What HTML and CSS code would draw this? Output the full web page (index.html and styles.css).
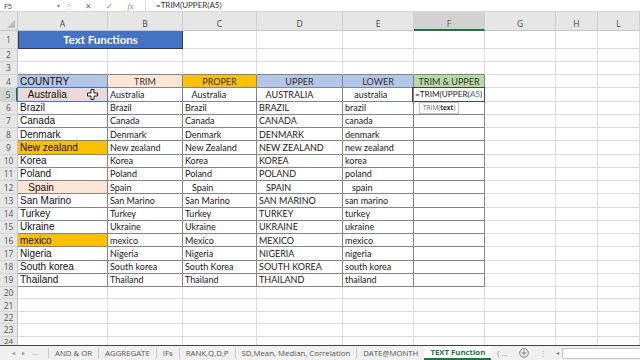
FILE: index.html
```html
<!DOCTYPE html>
<html>
<head>
<meta charset="utf-8">
<link rel="stylesheet" href="styles.css">
</head>
<body>
<div class="app">
  <div class="fbar">
    <div class="namebox"><span>F5</span><span class="dd">&#9662;</span></div>
    <div class="vdots">&#8942;</div>
    <div class="fbtn x">&#10005;</div>
    <div class="fbtn ok">&#10003;</div>
    <div class="fbtn fx"><i>fx</i></div>
    <div class="formula">=TRIM(UPPER(A5)</div>
  </div>

  <div class="sheet">
    <!-- header row -->
    <div class="corner"><span class="tri"></span></div>
    <div class="ch">A</div><div class="ch">B</div><div class="ch">C</div><div class="ch">D</div><div class="ch">E</div><div class="ch sel">F</div><div class="ch">G</div><div class="ch">H</div><div class="ch">L</div>

    <!-- row 1 -->
    <div class="rh">1</div>
    <div class="c title">Text Functions</div><div class="c"></div><div class="c"></div><div class="c"></div><div class="c"></div><div class="c"></div><div class="c"></div><div class="c"></div>
    <!-- row 2 -->
    <div class="rh">2</div>
    <div class="c"></div><div class="c"></div><div class="c"></div><div class="c"></div><div class="c"></div><div class="c"></div><div class="c"></div><div class="c"></div><div class="c"></div>
    <!-- row 3 -->
    <div class="rh">3</div>
    <div class="c tb"></div><div class="c tb"></div><div class="c tb"></div><div class="c tb"></div><div class="c tb"></div><div class="c tb"></div><div class="c"></div><div class="c"></div><div class="c"></div>
    <!-- row 4 -->
    <div class="rh">4</div>
    <div class="c t a blue">COUNTRY</div><div class="c t k ctr peach">TRIM</div><div class="c t k ctr orange">PROPER</div><div class="c t k ctr blue">UPPER</div><div class="c t k ctr blue">LOWER</div><div class="c t k ctr green">TRIM &amp; UPPER</div><div class="c"></div><div class="c"></div><div class="c"></div>
    <!-- row 5 -->
    <div class="rh sel">5</div>
    <div class="c t a rose ref">   Australia<svg class="cursor" width="11" height="11" viewBox="0 0 11 11"><path d="M4 0.5h3v3.5h3.5v3h-3.5v3.5h-3v-3.5h-3.5v-3h3.5z" fill="#fff" stroke="#222" stroke-width="1"/></svg></div><div class="c t k">Australia</div><div class="c t k">   Australia</div><div class="c t k">   AUSTRALIA</div><div class="c t k">    australia</div><div class="c t k active"><span class="ftxt">=TRIM(UPPER(<span class="refc">A5</span>)</span><div class="tip">TRIM(<b>text</b>)</div></div><div class="c"></div><div class="c"></div><div class="c"></div>
    <!-- row 6 -->
    <div class="rh">6</div>
    <div class="c t a">Brazil</div><div class="c t k">Brazil</div><div class="c t k">Brazil</div><div class="c t k">BRAZIL</div><div class="c t k">brazil</div><div class="c t k"></div><div class="c"></div><div class="c"></div><div class="c"></div>
    <!-- row 7 -->
    <div class="rh">7</div>
    <div class="c t a">Canada</div><div class="c t k">Canada</div><div class="c t k">Canada</div><div class="c t k">CANADA</div><div class="c t k">canada</div><div class="c t k"></div><div class="c"></div><div class="c"></div><div class="c"></div>
    <!-- row 8 -->
    <div class="rh">8</div>
    <div class="c t a">Denmark</div><div class="c t k">Denmark</div><div class="c t k">Denmark</div><div class="c t k">DENMARK</div><div class="c t k">denmark</div><div class="c t k"></div><div class="c"></div><div class="c"></div><div class="c"></div>
    <!-- row 9 -->
    <div class="rh">9</div>
    <div class="c t a orange">New zealand</div><div class="c t k">New zealand</div><div class="c t k">New Zealand</div><div class="c t k">NEW ZEALAND</div><div class="c t k">new zealand</div><div class="c t k"></div><div class="c"></div><div class="c"></div><div class="c"></div>
    <!-- row 10 -->
    <div class="rh">10</div>
    <div class="c t a">Korea</div><div class="c t k">Korea</div><div class="c t k">Korea</div><div class="c t k">KOREA</div><div class="c t k">korea</div><div class="c t k"></div><div class="c"></div><div class="c"></div><div class="c"></div>
    <!-- row 11 -->
    <div class="rh">11</div>
    <div class="c t a">Poland</div><div class="c t k">Poland</div><div class="c t k">Poland</div><div class="c t k">POLAND</div><div class="c t k">poland</div><div class="c t k"></div><div class="c"></div><div class="c"></div><div class="c"></div>
    <!-- row 12 -->
    <div class="rh">12</div>
    <div class="c t a peach">   Spain</div><div class="c t k">Spain</div><div class="c t k">   Spain</div><div class="c t k">   SPAIN</div><div class="c t k">   spain</div><div class="c t k"></div><div class="c"></div><div class="c"></div><div class="c"></div>
    <!-- row 13 -->
    <div class="rh">13</div>
    <div class="c t a">San Marino</div><div class="c t k">San Marino</div><div class="c t k">San Marino</div><div class="c t k">SAN MARINO</div><div class="c t k">san marino</div><div class="c t k"></div><div class="c"></div><div class="c"></div><div class="c"></div>
    <!-- row 14 -->
    <div class="rh">14</div>
    <div class="c t a">Turkey</div><div class="c t k">Turkey</div><div class="c t k">Turkey</div><div class="c t k">TURKEY</div><div class="c t k">turkey</div><div class="c t k"></div><div class="c"></div><div class="c"></div><div class="c"></div>
    <!-- row 15 -->
    <div class="rh">15</div>
    <div class="c t a">Ukraine</div><div class="c t k">Ukraine</div><div class="c t k">Ukraine</div><div class="c t k">UKRAINE</div><div class="c t k">ukraine</div><div class="c t k"></div><div class="c"></div><div class="c"></div><div class="c"></div>
    <!-- row 16 -->
    <div class="rh">16</div>
    <div class="c t a orange">mexico</div><div class="c t k">mexico</div><div class="c t k">Mexico</div><div class="c t k">MEXICO</div><div class="c t k">mexico</div><div class="c t k"></div><div class="c"></div><div class="c"></div><div class="c"></div>
    <!-- row 17 -->
    <div class="rh">17</div>
    <div class="c t a">Nigeria</div><div class="c t k">Nigeria</div><div class="c t k">Nigeria</div><div class="c t k">NIGERIA</div><div class="c t k">nigeria</div><div class="c t k"></div><div class="c"></div><div class="c"></div><div class="c"></div>
    <!-- row 18 -->
    <div class="rh">18</div>
    <div class="c t a">South korea</div><div class="c t k">South korea</div><div class="c t k">South Korea</div><div class="c t k">SOUTH KOREA</div><div class="c t k">south korea</div><div class="c t k"></div><div class="c"></div><div class="c"></div><div class="c"></div>
    <!-- row 19 -->
    <div class="rh">19</div>
    <div class="c t a">Thailand</div><div class="c t k">Thailand</div><div class="c t k">Thailand</div><div class="c t k">THAILAND</div><div class="c t k">thailand</div><div class="c t k"></div><div class="c"></div><div class="c"></div><div class="c"></div>
    <!-- rows 20-24 -->
    <div class="rh">20</div>
    <div class="c"></div><div class="c"></div><div class="c"></div><div class="c"></div><div class="c"></div><div class="c"></div><div class="c"></div><div class="c"></div><div class="c"></div>
    <div class="rh">21</div>
    <div class="c"></div><div class="c"></div><div class="c"></div><div class="c"></div><div class="c"></div><div class="c"></div><div class="c"></div><div class="c"></div><div class="c"></div>
    <div class="rh">22</div>
    <div class="c"></div><div class="c"></div><div class="c"></div><div class="c"></div><div class="c"></div><div class="c"></div><div class="c"></div><div class="c"></div><div class="c"></div>
    <div class="rh">23</div>
    <div class="c"></div><div class="c"></div><div class="c"></div><div class="c"></div><div class="c"></div><div class="c"></div><div class="c"></div><div class="c"></div><div class="c"></div>
    <div class="rh r24">24</div>
    <div class="c"></div><div class="c"></div><div class="c"></div><div class="c"></div><div class="c"></div><div class="c"></div><div class="c"></div><div class="c"></div><div class="c"></div>
  </div>

  <div class="tabbar">
    <div class="nav">
      <span class="arr">&#9666;</span><span class="arr">&#9656;</span><span class="more">...</span>
    </div>
    <div class="tab">AND &amp; OR</div>
    <div class="tab">AGGREGATE</div>
    <div class="tab">IFs</div>
    <div class="tab">RANK,Q,D,P</div>
    <div class="tab">SD,Mean, Median, Correlation</div>
    <div class="tab">DATE@MONTH</div>
    <div class="tab active">TEXT Function</div>
    <div class="tab last">( ...</div>
    <div class="plus"><svg width="10" height="10" viewBox="0 0 10 10"><circle cx="5" cy="5" r="4.3" fill="none" stroke="#777" stroke-width="0.9"/><path d="M5 2.6v4.8M2.6 5h4.8" stroke="#777" stroke-width="0.9"/></svg></div>
    <div class="vsep">&#8942;</div>
    <div class="hs"><span class="harr">&#9666;</span><div class="track"></div></div>
  </div>
</div>
</body>
</html>
```

FILE: styles.css
```css
html, body {
  margin: 0;
  padding: 0;
  background: #ffffff;
}
.app {
  width: 640px;
  height: 360px;
  display: flex;
  flex-direction: column;
  overflow: hidden;
  font-family: "Open Sans", "Noto Sans", sans-serif;
}

/* formula bar */
.fbar {
  height: 11px;
  flex: none;
  display: flex;
  align-items: center;
  border-bottom: 1px solid #d6d6d6;
  background: #fff;
  font-size: 7.5px;
  color: #444;
}
.namebox {
  width: 60px;
  margin-left: 2px;
  display: flex;
  justify-content: space-between;
  align-items: center;
  padding: 0 2px;
  box-sizing: border-box;
  height: 11px;
}
.namebox .dd {
  font-size: 6px;
  color: #888;
}
.vdots {
  width: 14px;
  text-align: center;
  color: #aaa;
  font-size: 8px;
}
.fbtn {
  width: 21px;
  text-align: center;
  color: #777;
  font-size: 8px;
}
.fbtn.x { margin-left: 2px; }
.fbtn.fx i {
  font-family: "Liberation Serif", serif;
  font-size: 8px;
  color: #888;
}
.formula {
  margin-left: 4px;
  padding-left: 10px;
  border-left: 1px solid #e2e2e2;
  height: 11px;
  line-height: 11px;
  color: #333;
  font-family: "Lato", sans-serif;
  font-size: 8px;
}

/* sheet */
.sheet {
  flex: 1;
  display: grid;
  grid-template-columns: 18px 90px 75px 74px 86px 71px 71px 71px 42px 42px;
  grid-template-rows: 19px 17.5px repeat(18, 13.25px) repeat(5, 12.4px);
  overflow: hidden;
  min-height: 0;
}
.corner {
  background: #e6e6e6;
  border-right: 1px solid #c6c6c6;
  border-bottom: 1px solid #c6c6c6;
  position: relative;
}
.corner .tri {
  position: absolute;
  right: 2px;
  bottom: 2px;
  width: 0;
  height: 0;
  border-left: 8px solid transparent;
  border-bottom: 8px solid #bcbcbc;
}
.ch {
  background: #e6e6e6;
  border-right: 1px solid #cfcfcf;
  border-bottom: 1px solid #c6c6c6;
  color: #444;
  font-size: 8.5px;
  display: flex;
  align-items: center;
  justify-content: center;
  padding-top: 5px;
  box-sizing: border-box;
}
.ch.sel {
  background: #d2d2d2;
  border-bottom: 2px solid #217346;
  color: #217346;
}
.rh {
  background: #e6e6e6;
  border-right: 1px solid #c6c6c6;
  border-bottom: 1px solid #d4d4d4;
  color: #555;
  font-size: 8.5px;
  display: flex;
  align-items: center;
  justify-content: center;
  box-sizing: border-box;
}
.rh.r24 { align-items: flex-start; line-height: 8px; padding-top: 0; font-size: 8px; }
.rh.sel {
  background: #d2d2d2;
  border-right: 2px solid #217346;
  color: #217346;
}

.c {
  border-right: 1px solid #dcdcdc;
  border-bottom: 1px solid #dcdcdc;
  box-sizing: border-box;
  display: flex;
  align-items: center;
  padding-left: 2px;
  white-space: pre;
  overflow: visible;
  color: #111;
  min-width: 0;
  position: relative;
}
.c.tb { border-bottom-color: #858585; }
.c.t {
  border-right-color: #858585;
  border-bottom-color: #858585;
}
.c.a {
  font-family: "Liberation Sans", Arial, sans-serif;
  font-size: 10px;
}
.c.k {
  font-family: "Lato", "Open Sans", sans-serif;
  font-size: 9px;
  color: #1a1a1a;
}
.c.ctr {
  justify-content: center;
  padding-left: 0;
  color: #333;
}
.title {
  grid-column: span 2;
  background: #4472c4;
  color: #fff;
  font-family: "Lato", "Open Sans", sans-serif;
  font-weight: 700;
  font-size: 11.5px;
  justify-content: center;
  border: 1px solid #3a3a3a;
  border-top: none;
  padding-left: 0;
}
.blue { background: #b4c6e7; }
.peach { background: #fce4d6; }
.orange { background: #ffc000; }
.green { background: #b9d9a4; }
.rose { background: #ead9d5; }

.ref::after {
  content: "";
  position: absolute;
  left: -1px;
  top: -1px;
  right: -1px;
  bottom: -1px;
  border: 1px solid #4472c4;
  pointer-events: none;
}
.cursor {
  position: absolute;
  left: 69px;
  top: 1px;
}
.active {
  color: #111;
  overflow: visible;
  padding-left: 1px;
}
.active .ftxt {
  font-size: 8.2px;
  position: relative;
  z-index: 3;
}
.active::after {
  content: "";
  position: absolute;
  left: -2px;
  top: -1px;
  right: -1px;
  bottom: -1px;
  border: 1.5px solid #444;
  pointer-events: none;
}
.refc { color: #4472c4; }
.tip {
  position: absolute;
  left: 5px;
  top: calc(100% + 1px);
  height: 10px;
  padding: 0 3px;
  background: #fff;
  border: 1px solid #c8c8c8;
  font-family: "Open Sans", sans-serif;
  font-size: 6.5px;
  line-height: 10px;
  color: #666;
  z-index: 2;
}
.tip b { color: #333; }

/* tab bar */
.tabbar {
  height: 15px;
  flex: none;
  display: flex;
  align-items: stretch;
  background: #f0f0f0;
  border-top: 1px solid #d2d2d2;
  font-size: 7.8px;
  color: #555;
  box-sizing: border-box;
  position: relative;
}
.nav {
  width: 48px;
  display: flex;
  align-items: center;
  padding-left: 12px;
  gap: 7px;
  box-sizing: border-box;
  color: #888;
}
.arr { font-size: 6px; line-height: 8px; }
.more { font-size: 7px; line-height: 8px; }
.tab {
  display: flex;
  align-items: center;
  padding: 0 6px;
  border-left: 1px solid #c8c8c8;
  margin: 2px 0;
}
.tab.active {
  background: #fff;
  color: #217346;
  font-weight: 700;
  margin: 0;
  border-left: none;
  border-bottom: 2px solid #217346;
  padding: 0 6px;
}
.tab.last {
  border-left: none;
  padding: 0 6px;
  color: #888;
}
.plus {
  display: flex;
  align-items: center;
  padding: 0 5px;
}
.vsep {
  display: flex;
  align-items: center;
  color: #aaa;
  padding: 0 5px;
}
.hs {
  flex: 1;
  display: flex;
  align-items: center;
  gap: 3px;
  padding-left: 4px;
}
.harr { font-size: 6px; color: #777; }
.track {
  flex: 1;
  height: 9px;
  background: #fff;
  border: 1px solid #c8c8c8;
  border-right: none;
}
```
